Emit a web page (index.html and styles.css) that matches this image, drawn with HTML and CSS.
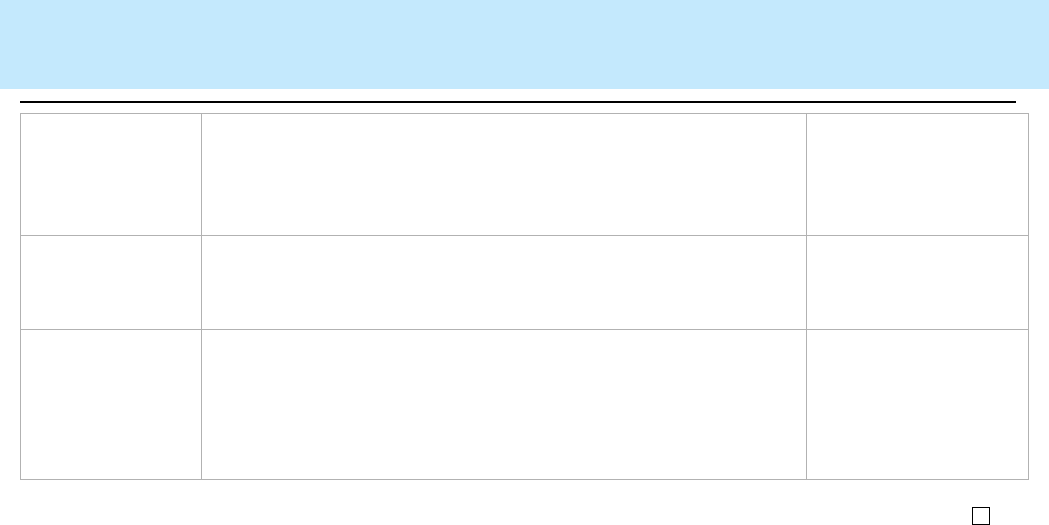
FILE: index.html
```html
<!DOCTYPE html>
<html>
<head>
<meta charset="utf-8">
<link rel="stylesheet" href="styles.css">
</head>
<body>
<header class="banner"></header>
<main class="content">
  <div class="rule"></div>
  <div class="grid">
    <div class="cell r1"></div><div class="cell r1"></div><div class="cell r1"></div>
    <div class="cell r2"></div><div class="cell r2"></div><div class="cell r2"></div>
    <div class="cell r3"></div><div class="cell r3"></div><div class="cell r3"></div>
  </div>
  <div class="footer"><span class="box"></span></div>
</main>
</body>
</html>
```
FILE: styles.css
```css
html, body { margin: 0; padding: 0; background: #fff; font-family: "Liberation Sans", Arial, sans-serif; }
body { overflow: hidden; }
.banner { height: 89px; background: #c4e9fd; }
.content { padding-left: 20px; }
.rule { margin-top: 12px; width: 996px; height: 2px; background: #000; }
.grid {
  margin-top: 10px;
  width: 1008px;
  display: grid;
  grid-template-columns: 181px 605px 222px;
  grid-template-rows: 122px 94px 150px;
  border-top: 1px solid #b2b2b2;
  border-left: 1px solid #b2b2b2;
}
.cell { border-right: 1px solid #b2b2b2; border-bottom: 1px solid #b2b2b2; box-sizing: border-box; }
.footer { display: flex; padding-left: 952px; margin-top: 27px; }
.box { width: 18px; height: 18px; box-sizing: border-box; border: 1px solid #000; }
```
